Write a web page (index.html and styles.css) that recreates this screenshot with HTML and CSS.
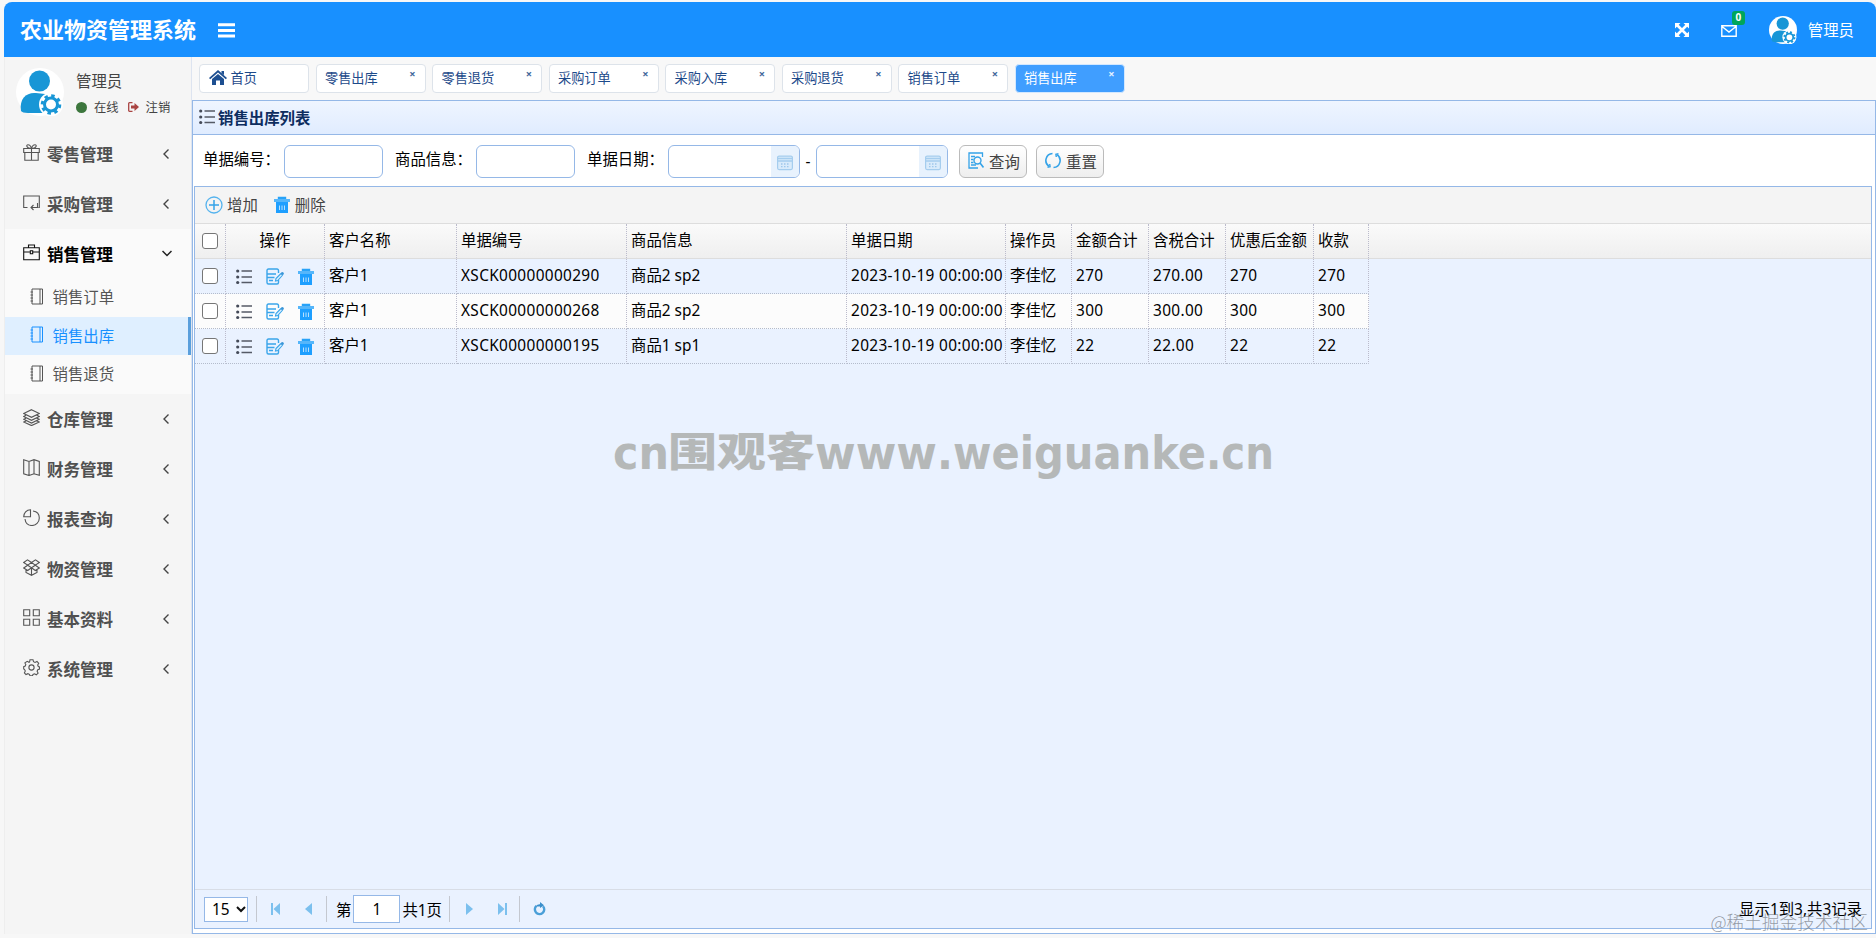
FILE: index.html
```html
<!DOCTYPE html>
<html lang="zh-CN">
<head>
<meta charset="utf-8">
<title>农业物资管理系统</title>
<link rel="stylesheet" href="styles.css">
</head>
<body>
<svg class="defs" width="0" height="0">
  <symbol id="user" viewBox="0 0 48 48"><circle cx="24" cy="24" r="24" fill="#fff"/><g fill="#1896d6"><circle cx="23.500" cy="13" r="10.500"/><path d="M5 43c-2-13 6-19 15-18l18 2-4 18H12c-4 0-6-1-7-2z"/></g><circle cx="35" cy="36.500" r="12" fill="#fff"/><circle cx="35" cy="36.500" r="6.500" fill="#fff" stroke="#1896d6" stroke-width="3"/><circle cx="35" cy="36.500" r="8.800" fill="none" stroke="#1896d6" stroke-width="3" stroke-dasharray="3.450 3.450"/></symbol>
  <symbol id="list" viewBox="0 0 16 16"><path d="M5.500 2H16M5.500 8H16M5.500 13.500H16" stroke="#555a66" stroke-width="1.300"/><g fill="#444a58"><circle cx="1.700" cy="2" r="1.600"/><circle cx="1.700" cy="8" r="1.600"/><circle cx="1.700" cy="13.500" r="1.600"/></g></symbol>
  <symbol id="edit" viewBox="0 0 18 18"><path d="M12.500 5V2.500Q12.500 1 11 1H2.500Q1 1 1 2.500v12Q1 16 2.500 16H11q1.500 0 1.500-1.500V12M1 6h9M1 9.500h7.500M3 12.500h4" fill="none" stroke="#3aa5ea" stroke-width="1.400"/><path d="M15 5.500 10 10.500 9.500 13l2.300-.5L16.700 7" fill="#d9efff" stroke="#3aa5ea" stroke-width="1.100"/><circle cx="16.300" cy="5.500" r="1.500" fill="#3a96d8"/></symbol>
  <symbol id="trash" viewBox="0 0 16 18"><path d="M5 3.500V2h6v1.500" fill="none" stroke="#27a2f8" stroke-width="2.400"/><path d="M0 3h16v3H0z" fill="#55b6fa"/><path d="M2 6h12v11H2z" fill="#1e9fff"/><path d="M5.500 9.500v4.500M8 9.500v4.500M10.500 9.500v4.500" stroke="#b5dfff" stroke-width="1"/></symbol>
  <symbol id="cal" viewBox="0 0 16 16"><rect x=".6" y="1.600" width="14.800" height="13.500" rx="1.500" fill="#d9ebfb" stroke="#a5cdee" stroke-width="1.200"/><path d="M1 4h14M1 6.500h14" stroke="#a5cdee" stroke-width="1.500"/><path d="M4 9.500h9M4 12.200h9" stroke="#9fc8ec" stroke-width="1.300" stroke-dasharray="1.500 1.500"/></symbol>
  <symbol id="left" viewBox="0 0 8 12"><path d="M6.500 1.500 2 6l4.500 4.500" fill="none" stroke="#444" stroke-width="1.400"/></symbol>
  <symbol id="book" viewBox="0 0 14 17"><path d="M2 1h10.500v15H2zM10 1v15M.5 4H3M.5 7H3M.5 10H3M.5 13H3" fill="none" stroke="currentColor"/></symbol>
</svg>

<div class="app">
  <header class="top">
    <h1 class="brand">农业物资管理系统</h1>
    <svg class="burger" width="17" height="15" viewBox="0 0 17 15"><path d="M0 1.700h17M0 7.400h17M0 13.100h17" stroke="#fff" stroke-width="3"/></svg>
    <div class="top-tools">
      <svg width="14" height="14" viewBox="0 0 14 14"><path d="M2 2l10 10M12 2 2 12" stroke="#fff" stroke-width="2.600"/><path d="M0 0h5.500L0 5.500zM14 0H8.500L14 5.500zM0 14h5.500L0 8.500zM14 14H8.500L14 8.500z" fill="#fff"/></svg>
      <span class="mail"><svg width="16" height="12" viewBox="0 0 16 12"><path d="M.8.8h14.400v10.400H.8zM1 1.500l7 5.500 7-5.500" fill="none" stroke="#fff" stroke-width="1.400"/></svg><b class="badge">0</b></span>
      <svg class="avatar-sm" width="28" height="28"><use href="#user"/></svg>
      <span class="who">管理员</span>
    </div>
  </header>
  <div class="main">
    <aside class="side">
      <div class="profile">
        <svg class="avatar" width="48" height="48"><use href="#user"/></svg>
        <div>
          <div class="pname">管理员</div>
          <div class="pstate"><i class="dot"></i><span>在线</span><svg width="11" height="10" viewBox="0 0 11 10"><path d="M4.500.7H1.500Q.7.700.7 1.500v7q0 .8.8.8h3" fill="none" stroke="#a94442" stroke-width="1.300"/><path d="M3 3.500h3.500V1L11 5 6.500 9V6.500H3z" fill="#a94442"/></svg><span>注销</span></div>
        </div>
      </div>
      <nav>
        <div class="item"><svg class="mi" viewBox="0 0 17 17"><path d="M.7 4.500h15.600v4H.7zM1.800 8.500v7.800h13.400V8.500M8.500 4.500v11.800M8.500 4.500C3 4 3 .8 5 .8s3 2 3.500 3.700C9 2.800 10 .8 12 .8s2 3.200-3.500 3.700"/></svg><span>零售管理</span><svg class="ar"><use href="#left"/></svg></div>
        <div class="item"><svg class="mi" viewBox="0 0 17 17"><path d="M4.500 13.500H.7V2h15.600v11.500h-1M14.500 9v4.500H8M10.500 11 8 13.500l2.500 2.500"/></svg><span>采购管理</span><svg class="ar"><use href="#left"/></svg></div>
        <div class="group">
          <div class="item open"><svg class="mi" viewBox="0 0 17 17"><path d="M.7 3.700h15.600v12H.7zM.7 8h6M10 8h6.300M7.300 6.800h2.400v3H7.300zM5.500 3.500V1h6v2.500"/></svg><span>销售管理</span><svg class="down" viewBox="0 0 10 7"><path d="M.5 1 5 5.500 9.500 1" fill="none" stroke="#222" stroke-width="1.500"/></svg></div>
          <div class="sub"><svg class="bk"><use href="#book"/></svg>销售订单</div>
          <div class="sub active"><svg class="bk"><use href="#book"/></svg>销售出库</div>
          <div class="sub"><svg class="bk"><use href="#book"/></svg>销售退货</div>
        </div>
        <div class="item"><svg class="mi" viewBox="0 0 17 17"><path d="M8.500.7 16.300 4.500 8.500 8.300.7 4.500zM3 6.300.7 7.500l7.800 3.800 7.800-3.800L14 6.300M3 9.300.7 10.300l7.800 3.800 7.800-3.800L14 9.300M3 12 .7 13l7.800 3.600L16.300 13 14 12"/></svg><span>仓库管理</span><svg class="ar"><use href="#left"/></svg></div>
        <div class="item"><svg class="mi" viewBox="0 0 17 17"><path d="M.7.700 6 2.500l5-1.800 5.300 1.800v13.800L11 14.800l-5 1.700-5.300-1.700zM6 2.500v14M11 .7v14"/></svg><span>财务管理</span><svg class="ar"><use href="#left"/></svg></div>
        <div class="item"><svg class="mi" viewBox="0 0 17 17"><path d="M7.500.7v7H.7C.7 4 3.500.7 7.500.7zM10 2c4 .5 6.300 3.500 6.300 7 0 4.500-3.500 7.500-7.300 7.500S2.500 14 2 10"/></svg><span>报表查询</span><svg class="ar"><use href="#left"/></svg></div>
        <div class="item"><svg class="mi" viewBox="0 0 17 17"><path d="M8.500 3.500 4.500.8.700 3.500l4 2.700zM8.500 3.500l4-2.700 3.800 2.700-4 2.700zM4.700 6.200.7 9l4 2.500 3.800-2.700zM12.300 6.200l4 2.800-4 2.500-3.800-2.700zM8.500 8.800v7.500M3 10.500v3l5.500 2.800 5.500-2.800v-3"/></svg><span>物资管理</span><svg class="ar"><use href="#left"/></svg></div>
        <div class="item"><svg class="mi" viewBox="0 0 17 17"><path d="M.7.700h6v6h-6zM10.300.7h6v6h-6zM.7 10.300h6v6h-6zM10.300 10.300h6v6h-6z"/></svg><span>基本资料</span><svg class="ar"><use href="#left"/></svg></div>
        <div class="item"><svg class="mi" viewBox="0 0 17 17"><circle cx="8.500" cy="8.500" r="2.600"/><path d="M7 .7h3l.5 2 1.500.7 2-1 1.700 1.900-1 1.700.6 1.500 1.200.5v2l-1.700.7-.7 1.500 1 1.900-1.800 1.700-1.800-1-1.500.6-.5 1.400H7l-.6-1.500-1.500-.6-1.900.9-1.600-1.800.9-1.700-.7-1.500-.9-.6V7.700l1.500-.6.600-1.500-.9-1.700L4.200 2.300l1.800 1 .6-.4z"/></svg><span>系统管理</span><svg class="ar"><use href="#left"/></svg></div>
      </nav>
    </aside>

    <section class="content">
      <div class="tabs">
        <div class="tab"><svg class="home" width="18" height="15" viewBox="0 0 18 15"><path d="M12.500 1H15v4l-2.500-2z M0 8 9 0l9 8-1.200 1.200L9 2.500 1.200 9.200z M3 9l6-5 6 5v6h-4v-4.500H7V15H3z" fill="#1d4f91"/></svg>首页</div>
        <div class="tab">零售出库<i>×</i></div>
        <div class="tab">零售退货<i>×</i></div>
        <div class="tab">采购订单<i>×</i></div>
        <div class="tab">采购入库<i>×</i></div>
        <div class="tab">采购退货<i>×</i></div>
        <div class="tab">销售订单<i>×</i></div>
        <div class="tab on">销售出库<i>×</i></div>
      </div>
      <div class="panel">
        <div class="panel-title"><svg width="16" height="16"><use href="#list"/></svg>销售出库列表</div>
        <div class="search">
          <label>单据编号：</label><span class="box"></span>
          <label>商品信息：</label><span class="box"></span>
          <label>单据日期：</label><span class="box date"><em><svg width="16" height="17"><use href="#cal"/></svg></em></span>
          <span class="dash">-</span><span class="box date"><em><svg width="16" height="17"><use href="#cal"/></svg></em></span>
          <button class="btn q"><svg width="16" height="17" viewBox="0 0 16 17"><path d="M14.500 5V1H1v15h9M3 4.500h4M3 7.500h2.500M3 10.500h2.500M3 13h5" fill="none" stroke="#35a3e8" stroke-width="1.300"/><circle cx="9.500" cy="8.500" r="3.500" fill="none" stroke="#35a3e8" stroke-width="1.400"/><path d="M12 11l3.500 4.500" stroke="#35a3e8" stroke-width="1.600"/></svg>查询</button>
          <button class="btn"><svg width="16" height="17" viewBox="0 0 16 17"><path d="M7.500 1.500A7 7 0 0 0 4 14.300M8.500 15.500A7 7 0 0 0 12 2.700" fill="none" stroke="#35a3e8" stroke-width="1.600"/><path d="M2.500 15.300l2.600-.5-.4-2.800M13.500 1.700l-2.600.5.4 2.800" fill="none" stroke="#35a3e8" stroke-width="1.400"/></svg>重置</button>
        </div>
        <div class="grid">
          <div class="toolbar">
            <svg width="18" height="18" viewBox="0 0 18 18"><path d="M9 4v10M4 9h10" stroke="#35a3e8" stroke-width="1.500"/><circle cx="9" cy="9" r="8" fill="none" stroke="#55b3ee" stroke-width="1.300"/></svg><span class="add">增加</span>
            <svg width="16" height="18"><use href="#trash"/></svg><span class="del">删除</span>
          </div>
          <div class="row head"><div class="cb"><input type="checkbox"></div><div class="mid">操作</div><div>客户名称</div><div>单据编号</div><div>商品信息</div><div>单据日期</div><div>操作员</div><div>金额合计</div><div>含税合计</div><div>优惠后金额</div><div>收款</div></div>
          <div class="row"><div class="cb"><input type="checkbox"></div><div class="ops"><svg width="16" height="16"><use href="#list"/></svg><svg width="18" height="18"><use href="#edit"/></svg><svg width="16" height="18"><use href="#trash"/></svg></div><div>客户1</div><div class="num">XSCK00000000290</div><div>商品2 sp2</div><div class="num">2023-10-19 00:00:00</div><div>李佳忆</div><div class="num">270</div><div class="num">270.00</div><div class="num">270</div><div class="num">270</div></div>
          <div class="row white"><div class="cb"><input type="checkbox"></div><div class="ops"><svg width="16" height="16"><use href="#list"/></svg><svg width="18" height="18"><use href="#edit"/></svg><svg width="16" height="18"><use href="#trash"/></svg></div><div>客户1</div><div class="num">XSCK00000000268</div><div>商品2 sp2</div><div class="num">2023-10-19 00:00:00</div><div>李佳忆</div><div class="num">300</div><div class="num">300.00</div><div class="num">300</div><div class="num">300</div></div>
          <div class="row"><div class="cb"><input type="checkbox"></div><div class="ops"><svg width="16" height="16"><use href="#list"/></svg><svg width="18" height="18"><use href="#edit"/></svg><svg width="16" height="18"><use href="#trash"/></svg></div><div>客户1</div><div class="num">XSCK00000000195</div><div>商品1 sp1</div><div class="num">2023-10-19 00:00:00</div><div>李佳忆</div><div class="num">22</div><div class="num">22.00</div><div class="num">22</div><div class="num">22</div></div>
          <div class="pager">
            <span class="size">15<svg width="10" height="7" viewBox="0 0 10 7"><path d="M1 1l4 4 4-4" fill="none" stroke="#111" stroke-width="2"/></svg></span>
            <i class="sep"></i>
            <svg class="p1" width="9" height="12" viewBox="0 0 9 12"><path d="M0 0h2v12H0zM9 0v12L2.500 6z" fill="#7cc0ee"/></svg>
            <svg class="p2" width="7" height="12" viewBox="0 0 7 12"><path d="M7 0v12L0 6z" fill="#7cc0ee"/></svg>
            <i class="sep s2"></i>
            <span class="di">第</span><span class="pno">1</span><span>共1页</span>
            <i class="sep s3"></i>
            <svg class="p3" width="7" height="12" viewBox="0 0 7 12"><path d="M0 0v12l7-6z" fill="#7cc0ee"/></svg>
            <svg class="p4" width="9" height="12" viewBox="0 0 9 12"><path d="M7 0h2v12H7zM0 0v12l6.500-6z" fill="#7cc0ee"/></svg>
            <i class="sep s4"></i>
            <svg class="p5" width="13" height="14" viewBox="0 0 13 14"><path d="M3.500 3.800A4.700 4.700 0 1 0 10 4.200" fill="none" stroke="#4a9fd8" stroke-width="2.400"/><path d="M2.500 4.500Q4.500 2 7 2.200V0l4 3.300L7 6V4.500z" fill="#3b8fcb"/></svg>
            <span class="total">显示1到3,共3记录</span>
          </div>
        </div>
      </div>
    </section>
  </div>
</div>
<svg class="wm" width="680" height="70" viewBox="0 0 680 70">
  <text x="5" y="44" textLength="56" lengthAdjust="spacingAndGlyphs">cn</text>
  <text class="zh" x="60" y="41" textLength="147" lengthAdjust="spacingAndGlyphs">围观客</text>
  <text x="207" y="44" textLength="122" lengthAdjust="spacingAndGlyphs">www</text>
  <text x="329" y="44" textLength="16" lengthAdjust="spacingAndGlyphs">.</text>
  <text x="345" y="44" textLength="253" lengthAdjust="spacingAndGlyphs">weiguanke</text>
  <text x="598" y="44" textLength="68" lengthAdjust="spacingAndGlyphs">.cn</text>
</svg>
<div class="credit">@稀土掘金技术社区</div>
</body>
</html>
```
FILE: styles.css
```css
* { box-sizing: border-box; }
body { margin: 0; background: #f7f7f7; font-family: "Noto Sans", "Noto Sans CJK SC", sans-serif; font-size: 15.4px; color: #000; height: 938px; overflow: hidden; }
svg { display: block; flex: none; }
.defs { position: absolute; }
i, em { font-style: normal; }
.app { margin: 2px 0 0 4px; height: 932px; display: flex; flex-direction: column; }
.top { height: 55px; background: #1890ff; border-radius: 8px 8px 0 0; display: flex; align-items: center; color: #fff; padding: 0 22px 0 16px; }
.brand { margin: 0; font: bold 22px/30px "Noto Sans CJK SC", sans-serif; white-space: nowrap; padding-bottom: 4px; }
.burger { margin: 2px 0 0 22px; }
.top-tools { margin-left: auto; display: flex; align-items: center; height: 55px; padding-top: 1px; }
.mail { position: relative; margin: 2px 32px 0 32px; }
.badge { position: absolute; left: 11px; top: -14px; width: 13px; height: 14px; border-radius: 3px; background: #00a65a; font-size: 10px; line-height: 13px; text-align: center; }
.avatar-sm { margin-right: 11px; }
.who { font-size: 15.4px; padding-bottom: 1px; }
.main { flex: 1; display: flex; min-height: 0; }
.side { width: 188px; background: #f5f5f5; border-left: 1px solid #eee; border-right: 1px solid #dde4f0; color: #444; font-family: "Noto Sans CJK SC", sans-serif; }
.profile { height: 72px; display: flex; padding: 11px 0 0 11px; gap: 12px; }
.pname { font-size: 15.4px; line-height: 25px; }
.pstate { display: flex; align-items: center; font-size: 12.3px; line-height: 24px; margin-top: 2px; white-space: nowrap; }
.pstate span { margin: 0 9px 0 7px; }
.pstate span:last-child { margin-left: 7px; margin-right: 0; }
.dot { width: 11px; height: 11px; border-radius: 50%; background: #3c763d; }
.item { height: 50px; display: flex; align-items: center; padding: 0 21px 0 18px; font-size: 16.5px; font-weight: bold; color: #505050; }
.item span { margin-left: 7px; flex: 1; white-space: nowrap; }
.mi { width: 17px; height: 17px; fill: none; stroke: #555; stroke-width: 1.1; margin-top: -3px; }
.open .mi { stroke: #111; }
.ar { width: 8px; height: 12px; }
.group { background: #fafafa; height: 165px; }
.group .item.open { color: #000; padding-right: 19px; height: 49px; }
.down { width: 10px; height: 7px; }
.group .sub { height: 38.500px; display: flex; align-items: center; padding: 0 0 2px 25px; gap: 8.500px; font-size: 15.4px; color: #555; }
.group .sub.active { color: #1890ff; background: #dfefff; border-right: 3px solid #5a9fdc; }
.bk { width: 14px; height: 17px; }
.content { flex: 1; min-width: 0; background: #f8f8f8; display: flex; flex-direction: column; }
.tabs { height: 43px; padding: 7px 0 0 7px; display: flex; gap: 6.500px; }
.tab { position: relative; width: 110px; height: 29px; background: #fff; border: 1px solid #dde3ea; border-radius: 4px; padding: 0 0 1px 8.500px; font: 13.2px/26px "Noto Sans CJK SC", sans-serif; color: #1d4a8a; display: flex; align-items: center; flex: none; }
.tab i { position: absolute; right: 9px; top: 2px; font: bold 11px/13px "Noto Sans", sans-serif; color: #44699c; }
.tab.on { background: #409eff; color: #fff; border-color: #d3e8ff; }
.tab.on i { color: #e2f0ff; }
.home { margin: -2px 4px 0 0; }
.panel { flex: 1; border: 1px solid #95b8e7; background: #fff; display: flex; flex-direction: column; min-height: 0; padding: 0 3px 4px 1px; }
.panel-title { height: 34px; margin: 0 -3px 0 -1px; border-bottom: 1px solid #95b8e7; background: linear-gradient(#eff5ff, #e0ecff); display: flex; align-items: center; padding: 0 0 2px 6px; gap: 3px; font: bold 15.4px/32px "Noto Sans CJK SC", sans-serif; color: #0e2d5f; }
.search { height: 51px; display: flex; align-items: center; padding: 1px 0 0 9px; }
.search label { width: 81px; white-space: nowrap; flex: none; margin-top: -5px; }
.box { width: 99px; height: 33px; border: 1px solid #95b8e7; border-radius: 6px; background: #fff; margin-right: 12px; overflow: hidden; flex: none; }
.date { width: 132px; margin-right: 0; display: flex; justify-content: flex-end; }
.date em { width: 28px; background: #e8f2fd; display: flex; align-items: center; padding: 2px 0 0 6px; }
.dash { width: 16px; text-align: center; }
.btn { width: 68px; height: 33px; margin-left: 9px; border: 1px solid #bbb; border-radius: 6px; background: linear-gradient(#fff, #eee); font: 15.4px "Noto Sans CJK SC", sans-serif; color: #444; display: flex; align-items: center; gap: 5px; padding: 0 0 1px 8px; white-space: nowrap; }
.btn.q { margin-left: 11px; }
.grid { flex: 1; border: 1px solid #95b8e7; background: #eaf2ff; display: flex; flex-direction: column; min-height: 0; }
.toolbar { height: 37px; background: #f4f4f4; border-bottom: 1px solid #ddd; display: flex; align-items: center; padding: 0 0 1px 10px; gap: 4px; color: #444; }
.toolbar .add { margin-right: 12px; }
.toolbar .del { margin-left: 1px; }
.row { display: grid; grid-template-columns: 31px 99px 132px 170px 220px 159px 66px 77px 77px 88px 55px; height: 35px; width: max-content; background: #eaf2ff; }
.row > div { border-right: 1px dotted #bbc; border-bottom: 1px dotted #b4bccc; padding-left: 4px; line-height: 33px; white-space: nowrap; overflow: hidden; }
.row .num { letter-spacing: .34px; }
.white { background: #fcfcfc; }
.head { width: auto; background: linear-gradient(#fafafa, #efefef); border-bottom: 1px solid #ddd; }
.row.head > div { border-bottom: 0; }
.row .cb { padding: 9px 0 0 7px; }
.cb input { display: block; appearance: none; margin: 0; width: 16px; height: 16px; border: 1px solid #767676; border-radius: 3px; background: #fff; }
.row .mid { text-align: center; padding: 0; }
.row .ops { display: flex; align-items: center; padding: 2px 0 0 10px; gap: 14px; }
.pager { margin-top: auto; height: 39px; border-top: 1px solid #d8dde6; display: flex; align-items: center; padding: 0 9px 0; }
.size { width: 44px; height: 25px; border: 1px solid #95b8e7; background: #fff; display: flex; align-items: center; padding-left: 7px; gap: 6px; }
.sep { width: 1px; height: 26px; background: #c4c8d0; margin-left: 8px; }
.p1 { margin-left: 14px; }
.p2 { margin-left: 25px; }
.s2 { margin-left: 14px; }
.di { margin: 0 2px 0 9px; }
.pno { width: 47px; height: 28px; border: 1px solid #95b8e7; background: #fff; text-align: center; line-height: 27px; margin-right: 2px; }
.s3 { margin-left: 7px; }
.p3 { margin-left: 16px; }
.p4 { margin-left: 25px; }
.s4 { margin-left: 12px; }
.p5 { margin-left: 13px; }
.total { margin-left: auto; padding-bottom: 2px; }
.wm { position: absolute; left: 608px; top: 425px; font: bold 46px "DejaVu Sans", "Noto Sans CJK SC", sans-serif; fill: #b5b8b8; }
.wm .zh { font: 900 40px "Noto Sans CJK SC", sans-serif; }
.credit { position: absolute; right: 8px; top: 908px; font: 300 17.700px/26px "Noto Sans CJK SC", sans-serif; color: rgba(120, 125, 135, .75); white-space: nowrap; }
```
